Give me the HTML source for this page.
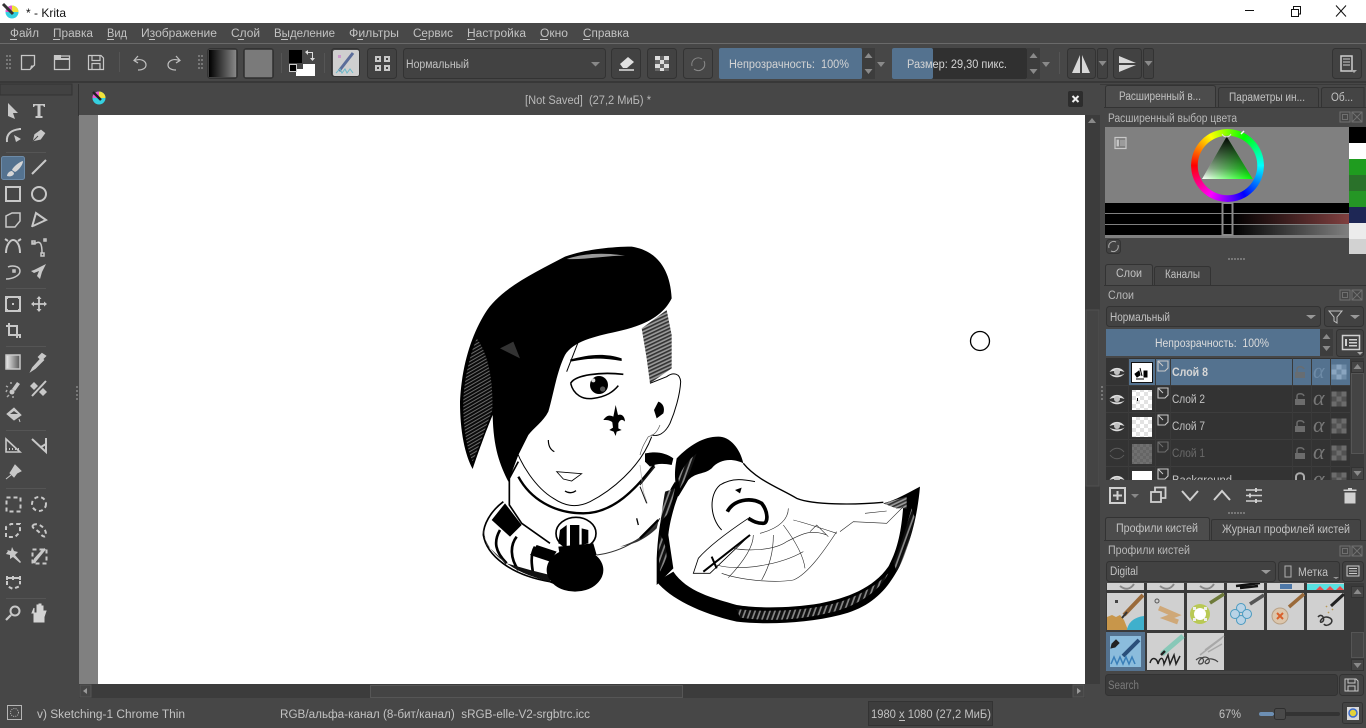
<!DOCTYPE html>
<html lang="ru"><head><meta charset="utf-8"><title>Krita</title>
<style>
html,body{margin:0;padding:0;width:1366px;height:728px;overflow:hidden;background:#474747}
svg{display:block}
text{font-family:"Liberation Sans",sans-serif;font-size:11.5px;fill:#c2c2c2;white-space:pre}
.b{fill:#3d3d3d;stroke:#2f2f2f}
.btn{fill:#424242;stroke:#333}
.i{fill:none;stroke:#c8c8c8;stroke-width:2}
.f{fill:#c8c8c8}
.d{fill:none;stroke:#c8c8c8;stroke-width:2;stroke-dasharray:4 3}
.cell{fill:#d0d0d0}
.al{font-family:"Liberation Serif",serif;font-style:italic;font-size:22px;fill:#777}
</style></head><body>
<svg width="1366" height="728" viewBox="0 0 1366 728" xmlns="http://www.w3.org/2000/svg">
<defs>
<pattern id="ck" width="8" height="8" patternUnits="userSpaceOnUse"><rect width="8" height="8" fill="#fff"/><rect width="4" height="4" fill="#e2e2e2"/><rect x="4" y="4" width="4" height="4" fill="#e2e2e2"/></pattern>
<pattern id="ck2" width="6" height="6" patternUnits="userSpaceOnUse"><rect width="6" height="6" fill="#666"/><rect width="3" height="3" fill="#707070"/><rect x="3" y="3" width="3" height="3" fill="#707070"/></pattern>
<pattern id="hat" width="9" height="9" patternUnits="userSpaceOnUse" patternTransform="rotate(60)"><rect width="9" height="9" fill="#6a6a6a"/><rect width="6" height="9" fill="#0a0a0a"/></pattern>
<pattern id="hat2" width="10" height="10" patternUnits="userSpaceOnUse" patternTransform="rotate(-25)"><rect width="10" height="10" fill="#9a9a9a"/><rect width="10" height="5" fill="#333"/></pattern>
<pattern id="hat3" width="14" height="14" patternUnits="userSpaceOnUse" patternTransform="rotate(20)"><rect width="14" height="14" fill="#888"/><rect width="9" height="14" fill="#111"/></pattern>
<linearGradient id="g1" x1="0" x2="1" y1="0" y2="0"><stop offset="0" stop-color="#000"/><stop offset="1" stop-color="#888"/></linearGradient>
<linearGradient id="g2" x1="0" x2="1" y1="0" y2="0"><stop offset="0" stop-color="#eee"/><stop offset="1" stop-color="#555"/></linearGradient>
<linearGradient id="tw" x1="0" x2="1" y1="0" y2="0"><stop offset="0" stop-color="#fff"/><stop offset="1" stop-color="#0f0"/></linearGradient>
<linearGradient id="tb" x1="0" x2="0" y1="0" y2="1"><stop offset="0" stop-color="#000"/><stop offset=".75" stop-color="#000" stop-opacity=".35"/><stop offset="1" stop-color="#000" stop-opacity="0"/></linearGradient>
<linearGradient id="sr" x1="0" x2="1" y1="0" y2="0"><stop offset="0" stop-color="#000"/><stop offset="1" stop-color="#804040"/></linearGradient>
<linearGradient id="sg" x1="0" x2="1" y1="0" y2="0"><stop offset="0" stop-color="#000"/><stop offset="1" stop-color="#808080"/></linearGradient>
<clipPath id="lc"><rect x="1106" y="358" width="244" height="122"/></clipPath>
<clipPath id="pc"><rect x="1106" y="583" width="244" height="88"/></clipPath>
<g id="eye"><path d="M-7.500 0C-4-5.500 4-5.500 7.500 0C4-1.500-4-1.500-7.500 0Z" fill="#dcdcdc"/><path d="M-7.500 1.500C-4 6.500 4 6.500 7.500 1.500C4 4-4 4-7.500 1.500Z" fill="#dcdcdc"/><circle r="3" fill="#c0c0c0"/></g>
<g id="lk"><path d="M-5 0H5V6H-5Z" fill="#6c6c6c"/><path d="M-3 0V-3C-3-6 3-6 4-3" fill="none" stroke="#6c6c6c" stroke-width="1.500"/></g>
<g id="lg"><rect x="-7.500" y="-7.500" width="15" height="15" fill="#525252"/><path d="M-7.500-7.500h5v5h-5zM2.500-7.500h5v5h-5zM-2.500-2.500h5v5h-5zM-7.500 2.500h5v5h-5zM2.500 2.500h5v5h-5z" fill="#6c6c6c"/></g>
<g id="lay"><path d="M-5-5H5V2L2 5H-5Z" fill="none" stroke="#c8c8c8" stroke-width="1.100"/><path d="M-5-5L0 0M-5-1V-5H-1" stroke="#c8c8c8" fill="none"/></g>
<g id="dk"><rect x="-5" y="-5" width="10" height="10" fill="none" stroke="#707070"/><rect x="-2.500" y="-2.500" width="5" height="5" fill="none" stroke="#707070"/><rect x="7" y="-5" width="10" height="10" fill="none" stroke="#707070"/><path d="M7-5L17 5M17-5L7 5" stroke="#707070"/></g>
<g id="up"><path d="M0-3L4 2H-4Z" fill="#8a8a8a"/></g>
<g id="dn"><path d="M-4-2H4L0 3Z" fill="#8a8a8a"/></g>
</defs>

<rect width="1366" height="728" fill="#474747"/>

<!-- title bar -->
<rect width="1366" height="23" fill="#fff"/>
<circle cx="12" cy="12" r="6.500" fill="#35d0e0"/><path d="M12 5.500A6.500 6.500 0 0 1 18.500 12L12 12Z" fill="#f2e23a"/><path d="M5.500 12A6.500 6.500 0 0 1 12 5.500L12 12Z" fill="#e85bd0"/><path d="M3 4L13 14" stroke="#333" stroke-width="3"/>
<text x="26" y="17" textLength="40" lengthAdjust="spacingAndGlyphs" style="fill:#111;font-size:12px">* - Krita</text>
<rect x="1245" y="10" width="9" height="1" fill="#111"/>
<path d="M1291.500 9.500H1298.500V16.500H1291.500ZM1293.500 9.500V6.500H1300.500V14H1298.500" fill="none" stroke="#111"/>
<path d="M1336 5.500L1346 16.500M1346 5.500L1336 16.500" stroke="#111" fill="none"/>

<!-- menu -->
<rect y="23" width="1366" height="20" fill="#484848"/>
<rect y="43" width="1366" height="1" fill="#6a6a6a"/>
<text x="10" y="37" textLength="29" lengthAdjust="spacingAndGlyphs">Файл</text><rect x="10" y="39" width="7" height="1" fill="#c2c2c2"/>
<text x="53" y="37" textLength="40" lengthAdjust="spacingAndGlyphs">Правка</text><rect x="53" y="39" width="7" height="1" fill="#c2c2c2"/>
<text x="107" y="37" textLength="20" lengthAdjust="spacingAndGlyphs">Вид</text><rect x="107" y="39" width="7" height="1" fill="#c2c2c2"/>
<text x="141" y="37" textLength="76" lengthAdjust="spacingAndGlyphs">Изображение</text><rect x="149" y="39" width="6" height="1" fill="#c2c2c2"/>
<text x="231" y="37" textLength="29" lengthAdjust="spacingAndGlyphs">Слой</text><rect x="238" y="39" width="6" height="1" fill="#c2c2c2"/>
<text x="274" y="37" textLength="61" lengthAdjust="spacingAndGlyphs">Выделение</text><rect x="281" y="39" width="7" height="1" fill="#c2c2c2"/>
<text x="349" y="37" textLength="50" lengthAdjust="spacingAndGlyphs">Фильтры</text><rect x="357" y="39" width="6" height="1" fill="#c2c2c2"/>
<text x="413" y="37" textLength="40" lengthAdjust="spacingAndGlyphs">Сервис</text><rect x="420" y="39" width="6" height="1" fill="#c2c2c2"/>
<text x="467" y="37" textLength="59" lengthAdjust="spacingAndGlyphs">Настройка</text><rect x="467" y="39" width="8" height="1" fill="#c2c2c2"/>
<text x="540" y="37" textLength="28" lengthAdjust="spacingAndGlyphs">Окно</text><rect x="540" y="39" width="8" height="1" fill="#c2c2c2"/>
<text x="583" y="37" textLength="46" lengthAdjust="spacingAndGlyphs">Справка</text><rect x="583" y="39" width="7" height="1" fill="#c2c2c2"/>

<!-- toolbar -->
<path d="M6 55h2v2h-2zM6 59h2v2h-2zM6 63h2v2h-2zM6 67h2v2h-2zM9 55h2v2h-2zM9 59h2v2h-2zM9 63h2v2h-2zM9 67h2v2h-2z" fill="#777"/>
<path d="M198 55h2v2h-2zM198 59h2v2h-2zM198 63h2v2h-2zM198 67h2v2h-2zM201 55h2v2h-2zM201 59h2v2h-2zM201 63h2v2h-2zM201 67h2v2h-2z" fill="#777"/>
<path d="M21.500 55.500H34.500V65L30 69.500H21.500Z" fill="none" stroke="#c8c8c8" stroke-width="1.300"/><path d="M30 69L31 65.500H35" fill="#c8c8c8"/>
<path d="M54.500 56H69.500V69.500H54.500Z" fill="none" stroke="#c8c8c8" stroke-width="1.300"/><rect x="54" y="55" width="7" height="3" fill="#c8c8c8"/><rect x="54" y="58" width="16" height="2" fill="#c8c8c8"/>
<path d="M88.500 55.500H101L103.500 58V69.500H88.500ZM92 55.500V60.500H100V55.500M92 69.500V63.500H100V69.500" fill="none" stroke="#c8c8c8" stroke-width="1.200"/>
<rect x="119" y="52" width="1" height="20" fill="#555"/>
<path d="M138 56L134 60.500L138 63M134.500 60.500C141 58 146 61 146 65C146 68 143 70 138 70" fill="none" stroke="#c0c0c0" stroke-width="1.200"/>
<path d="M176 56L180 60.500L176 63M179.500 60.500C173 58 168 61 168 65C168 68 171 70 176 70" fill="none" stroke="#c0c0c0" stroke-width="1.200"/>
<rect x="207.500" y="48.500" width="30" height="30" rx="3" class="btn"/><rect x="209" y="50" width="27" height="27" fill="url(#g1)"/>
<rect x="243.500" y="48.500" width="30" height="30" rx="3" class="btn"/><rect x="245" y="50" width="27" height="27" fill="#7a7a7a"/>
<rect x="281" y="53" width="1" height="20" fill="#555"/>
<rect x="289" y="50" width="13" height="13" fill="#000"/><rect x="303" y="64" width="12" height="12" fill="#fff"/>
<rect x="296" y="69" width="7" height="7" fill="#fff"/><rect x="289.500" y="64.500" width="7" height="7" fill="#000" stroke="#ccc"/>
<path d="M305 52L308 50V52H313V58H315L312.500 61L310 58H312V53H308V55Z" fill="#ddd"/>
<rect x="324" y="53" width="1" height="20" fill="#555"/>
<rect x="331.500" y="48.500" width="28" height="28" rx="3" class="btn"/><rect x="333" y="50" width="26" height="26" fill="#cfcfcf" rx="2"/>
<path d="M339 71L353 53" stroke="#5b6d9a" stroke-width="3"/><path d="M336 73L340 69L342 73L345 69L347 73L350 69L353 73" fill="none" stroke="#6db9c9"/><rect x="338" y="55" width="3" height="3" fill="#c9c"/>
<rect x="367.500" y="48.500" width="29" height="30" rx="3" class="btn"/>
<path d="M375 56h6v6h-6zM384 56h6v6h-6zM375 65h6v6h-6zM384 65h6v6h-6z" fill="#c8c8c8"/><rect x="377" y="58" width="2" height="2" fill="#424242"/><rect x="386" y="58" width="2" height="2" fill="#424242"/><rect x="377" y="67" width="2" height="2" fill="#424242"/><rect x="386" y="67" width="2" height="2" fill="#424242"/>
<rect x="403.500" y="48.500" width="202" height="30" rx="3" class="btn"/>
<text x="406" y="68" textLength="63" lengthAdjust="spacingAndGlyphs">Нормальный</text>
<path d="M591 62H600L595.500 66.500Z" fill="#888"/>
<rect x="611.500" y="48.500" width="29" height="30" rx="3" class="btn"/>
<path d="M620 64L628 57L634 62L627 68H623Z" fill="#e0e0e0"/><path d="M619 70H634" stroke="#e0e0e0" stroke-width="1.500"/>
<rect x="647.500" y="48.500" width="29" height="30" rx="3" class="btn"/>
<rect x="655" y="56" width="14" height="15" fill="#ddd"/><path d="M660 56h4v4h-4zM655 60h5v4h-5zM664 60h5v4h-5zM660 64h4v4h-4zM655 68h5v3h-5zM664 68h5v3h-5z" fill="#666"/>
<rect x="683.500" y="48.500" width="29" height="30" rx="3" class="btn" style="fill:#474747"/>
<path d="M692 66A6.500 6.500 0 0 1 702 59M704 61A6.500 6.500 0 0 1 694 69" fill="none" stroke="#8a8a8a"/>
<rect x="719" y="48" width="143" height="31" rx="2" fill="#54728f"/>
<text x="729" y="68" textLength="120" lengthAdjust="spacingAndGlyphs" style="fill:#d4d4d4">Непрозрачность:  100%</text>
<rect x="862" y="48" width="13" height="31" fill="#3d3d3d"/><use href="#up" x="868.500" y="56"/><use href="#dn" x="868.500" y="71"/>
<use href="#dn" x="881" y="64"/>
<rect x="892" y="48" width="135" height="31" rx="2" fill="#303030"/><rect x="892" y="48" width="41" height="31" rx="2" fill="#54728f"/>
<text x="907" y="68" textLength="100" lengthAdjust="spacingAndGlyphs" style="fill:#d4d4d4">Размер: 29,30 пикс.</text>
<rect x="1027" y="48" width="13" height="31" fill="#3d3d3d"/><use href="#up" x="1033.500" y="56"/><use href="#dn" x="1033.500" y="71"/>
<use href="#dn" x="1046" y="64"/>
<rect x="1059" y="52" width="1" height="22" fill="#555"/>
<rect x="1067.500" y="48.500" width="28" height="30" rx="3" class="btn"/><path d="M1080 55V73H1072ZM1082 55V73H1090Z" fill="#d8d8d8"/>
<rect x="1097.500" y="48.500" width="10" height="30" rx="2" class="btn"/><use href="#dn" x="1102.500" y="63"/>
<rect x="1113.500" y="48.500" width="28" height="30" rx="3" class="btn"/><path d="M1119 56L1136 63H1119ZM1119 65H1136L1119 72Z" fill="#d8d8d8"/>
<rect x="1143.500" y="48.500" width="10" height="30" rx="2" class="btn"/><use href="#dn" x="1148.500" y="63"/>
<rect x="1332.500" y="48.500" width="29" height="30" rx="3" class="btn"/>
<path d="M1341 56H1352V71H1341Z" fill="none" stroke="#ccc" stroke-width="1.500"/><path d="M1343 59H1350M1343 62H1350M1343 65H1350" stroke="#ccc"/><path d="M1351 70H1357L1354 73Z" fill="#aaa"/>
<rect y="81" width="1366" height="2" fill="#383838"/>

<!-- left toolbox -->
<rect x="0" y="84" width="72" height="11" fill="#424242" stroke="#333"/>
<rect x="78" y="84" width="1" height="32" fill="#333"/>
<rect x="1.500" y="156.500" width="23" height="23" rx="2" fill="#54728f" stroke="#6d8ba8"/>
<path d="M8 103L18 113L13 113L15 119L8 116Z" fill="#c8c8c8"/>
<path d="M33 104H45V107H44L43 105.500H40.500V116H42.500V118H35.500V116H37.500V105.500H35L34 107H33Z" fill="#c8c8c8"/>
<path d="M7 142C6 134 11 130 20 129" class="i"/><path d="M14 135L21 139L16 142Z" class="f"/><rect x="19" y="128" width="2" height="2" class="f"/>
<path d="M32 142L34 134L41 129L46 133L41 140ZM33 141L38 136" class="f" stroke="#474747"/>
<path d="M23 161C19 162 13 167 12 170L15 172C18 171 23 165 23 161ZM12 171C9 171 7 174 7 176C10 177 14 176 14 173Z" fill="#d6d6d6"/>
<path d="M32 174L46 160" class="i"/>
<rect x="6" y="187" width="14" height="14" class="i"/>
<circle cx="39" cy="194" r="7" class="i"/>
<path d="M6 222V216L12 213H20V221L15 227H6Z" class="i" style="stroke-width:1.500"/>
<path d="M32 227L36 213L46 220L33 226" class="i"/>
<path d="M6 253C6 244 11 240 13 240C16 240 20 244 20 253M5 239L8 241M21 239L18 241" class="i"/>
<path d="M32 243H36C40 241 42 243 42 253M32 241h3v3h-3zM41 253h3v3h-3zM44 239h2v2h-2z" class="i" style="stroke-width:1.500"/>
<path d="M6 279C12 279 20 276 20 271C20 266 12 265 8 267M13 270h2v2h-2z" class="i" style="stroke-width:1.500"/>
<path d="M46 264L34 270l-3 1 3 2 5-2-2 5 3 3 2-7ZM46 264L43 274" class="f"/>
<rect x="6" y="297" width="14" height="14" class="i"/><path d="M5 296h3v3h-3zM18 296h3v3h-3zM5 309h3v3h-3zM18 309h3v3h-3zM12 303h2v2h-2z" class="f"/>
<path d="M39 297V311M32 304H46" stroke="#c8c8c8" stroke-width="1.800"/><path d="M39 296l-2.500 3h5zM39 312l-2.500-3h5zM31 304l3-2.500v5zM47 304l-3-2.500v5z" class="f"/>
<path d="M9 323V335H20V338M6 326H17V338" class="i"/>
<rect x="6" y="355" width="14" height="14" fill="url(#g2)" stroke="#c8c8c8" stroke-width="1.500"/>
<path d="M45 356L42 359L43 360L35 368L32 370L33 368L41 359L39 357L42 354Z" class="f" stroke="#c8c8c8" stroke-width="2"/>
<path d="M17 382L20 384L15 391L12 389Z" class="f"/><path d="M6 392l1-2M6 386l2 1M11 382l0 2M7 397l2-2M13 396l0 2" stroke="#aaa" stroke-width="1.500"/><circle cx="12" cy="392" r="2.500" class="f"/>
<path d="M34 382l4 4-4 4-4-4zM43 388l4 4-4 4-4-4z" fill="#c8c8c8"/><path d="M46 381L32 396" stroke="#c8c8c8" stroke-width="2"/>
<path d="M7 414L14 408L21 415L14 420ZM19 419l1 3" class="f" stroke="#c8c8c8"/><path d="M10 414L14 411L18 414" fill="#474747"/>
<path d="M6 452V439L20 452Z" class="i" style="stroke-width:1.600"/><path d="M6 449h14" stroke="#c8c8c8" stroke-dasharray="1 2" stroke-width="2"/>
<path d="M32 439L46 452V438M41 447L46 444" class="i"/>
<path d="M15 465L21 471L17 473L14 477L10 473L12 470ZM11 475L6 479" class="f" stroke="#c8c8c8"/>
<rect x="6.500" y="497.500" width="14" height="14" class="d"/>
<circle cx="39" cy="504" r="7" class="d"/>
<path d="M6 537V527L11 524H20V532L15 537Z" class="d"/>
<path d="M33 525C38 522 46 528 46 534C46 538 42 537 39 532C36 529 31 528 33 525Z" class="d"/>
<path d="M7 550l4 1 1-4 2 4 4 1-3 3 6 7-1 1-7-6-3 2 0-4-4-1 2-3Z" class="f"/>
<rect x="32.500" y="549.500" width="14" height="14" class="d"/><path d="M45 549L36 560L34 563L35 559L43 550Z" class="f" stroke="#c8c8c8" stroke-width="2"/>
<path d="M6 578H20" stroke="#c8c8c8" stroke-width="2"/><path d="M6 576h2v4h-2zM12 576h2v4h-2zM19 576h2v4h-2z" class="f"/><path d="M7 581V586L13 589L20 586V581" class="d"/>
<circle cx="15" cy="611" r="4.500" class="i"/><path d="M11 615L6 620" stroke="#c8c8c8" stroke-width="2.200"/>
<path d="M32 613L34 608V622H44V617L46 611H44L43 614V606H41V613V604H39V613V605H37V613L35 613Z" fill="#d4d4d4" stroke="#d4d4d4"/>
<g fill="#555"><rect x="6" y="152" width="40" height="1"/><rect x="6" y="288" width="40" height="1"/><rect x="6" y="346" width="40" height="1"/><rect x="6" y="430" width="40" height="1"/><rect x="6" y="488" width="40" height="1"/><rect x="6" y="598" width="40" height="1"/></g>
<path d="M76 386h2v2h-2zM76 390h2v2h-2zM76 394h2v2h-2zM76 398h2v2h-2z" fill="#777"/>

<!-- document -->
<text x="525" y="104" textLength="126" lengthAdjust="spacingAndGlyphs" style="fill:#b8b8b8">[Not Saved]  (27,2 МиБ) *</text>
<circle cx="99" cy="98" r="6.500" fill="#35d0e0"/><path d="M99 91.500A6.500 6.500 0 0 1 105.500 98L99 98Z" fill="#f2e23a"/><path d="M92.500 98A6.500 6.500 0 0 1 99 91.500L99 98Z" fill="#e85bd0"/><path d="M93 92L101 100" stroke="#222" stroke-width="2.500"/>
<rect x="1068" y="91" width="15" height="16" rx="2" fill="#2d2d2d"/><path d="M1072.500 96L1078.500 102M1078.500 96L1072.500 102" stroke="#eee" stroke-width="2"/>
<rect x="79" y="115" width="1006" height="569" fill="#808080"/>
<rect x="98" y="115" width="987" height="569" fill="#fff"/>
<rect x="1085" y="115" width="15" height="569" fill="#3c3c3c"/>
<use href="#up" x="1092" y="121"/>
<rect x="1086" y="310" width="13" height="176" fill="#444" stroke="#4f4f4f"/>
<rect x="79" y="684" width="1006" height="14" fill="#3c3c3c"/>
<rect x="80" y="685" width="11" height="12" fill="#464646" stroke="#555"/><path d="M87 688V694L83 691Z" fill="#999"/>
<rect x="370.500" y="685.500" width="312" height="12" fill="#444" stroke="#565656"/>
<rect x="1073" y="685" width="11" height="12" fill="#464646" stroke="#555"/><path d="M1077 688V694L1081 691Z" fill="#999"/>

<!-- character -->
<g transform="translate(450 235) scale(.33333)">
 <path d="M545 35C610 45 660 90 665 190C640 240 590 270 500 290C430 305 370 320 345 360C320 410 310 480 295 530C280 560 250 580 235 600L205 660L175 740C150 690 130 640 128 540C115 570 85 650 68 702C45 660 30 590 30 500C35 390 65 300 105 235C150 160 260 110 345 65C400 45 480 35 545 35Z" fill="#000"/>
 <path d="M80 310C110 350 130 420 127 525C110 570 85 640 68 680C50 640 38 570 40 490C45 420 60 360 80 310Z" fill="url(#hat)"/>
 <path d="M150 340L210 370L190 320Z" fill="#333"/>
 <path d="M350 72C400 55 460 52 525 62C470 62 400 75 350 72Z" fill="#999"/>
 <path d="M575 280L650 225L665 300L665 400L600 445L590 370Z" fill="url(#hat2)"/>
 <path d="M385 320L350 410" stroke="#000" stroke-width="3" fill="none"/>
 <path d="M360 374C410 360 460 352 515 370L515 378C460 368 420 368 362 380Z" fill="#000"/>
 <path d="M362 445C375 420 450 410 520 418" fill="none" stroke="#000" stroke-width="5"/>
 <path d="M362 445C370 480 400 495 430 490C470 485 490 470 505 452" fill="none" stroke="#000" stroke-width="4.500"/>
 <circle cx="447" cy="450" r="27" fill="#000"/><circle cx="430" cy="436" r="6" fill="#ddd"/><circle cx="458" cy="462" r="8" fill="#555"/>
 <path d="M497 510L504 540C515 535 525 545 525 560C518 552 510 552 505 565L505 580L515 585L500 590L497 603L491 590L478 585L489 578L487 562C480 555 470 555 460 555C470 540 480 540 490 545Z" fill="#000"/>
 <path d="M600 445L650 425C670 410 690 415 692 440C690 480 675 530 660 565C645 595 625 605 605 600" fill="none" stroke="#000" stroke-width="3"/>
 <path d="M625 500C640 505 645 520 640 535L620 550L612 525Z" fill="#000"/>
 <path d="M295 615C295 635 303 645 313 650" fill="none" stroke="#000" stroke-width="3.500"/>
 <path d="M320 710L395 716L365 738L340 732Z" fill="#fff" stroke="#000" stroke-width="2.500"/>
 <path d="M345 768C355 775 368 775 378 767" fill="none" stroke="#000" stroke-width="4"/>
 <path d="M190 620C210 690 260 760 310 790C340 810 375 822 420 800C480 770 570 700 605 605" fill="none" stroke="#000" stroke-width="3"/>
 <path d="M205 725C240 790 310 835 400 835C490 835 560 760 612 690" fill="none" stroke="#000" stroke-width="7"/>
 <path d="M590 655C620 648 650 655 668 670L665 685C640 680 600 695 585 680Z" fill="#000"/>
 <path d="M570 690L580 770L592 805" fill="none" stroke="#aaa" stroke-width="2"/>
 <path d="M205 680L178 730L178 810L215 865L300 925" fill="none" stroke="#000" stroke-width="5"/>
 <path d="M440 960C520 950 590 905 630 850" fill="none" stroke="#333" stroke-width="3"/>
 <path d="M560 850L565 870" stroke="#000" stroke-width="4"/>
 <path d="M510 935C560 920 600 890 625 860L620 880C590 910 550 930 510 935Z" fill="#333"/>
 <path d="M160 800C120 830 100 870 100 900C110 960 180 1020 300 1040L340 1055" fill="none" stroke="#000" stroke-width="5"/>
 <path d="M165 805L215 870L180 905L125 855Z" fill="#000"/>
 <path d="M150 885C130 920 135 950 170 985M200 905C180 930 180 970 205 1005M255 935C240 960 245 990 250 1020" fill="none" stroke="#000" stroke-width="8"/>
 <path d="M100 880C100 920 130 960 170 985L110 930Z" fill="#444"/>
 <path d="M170 985C210 1015 260 1030 300 1040L300 1020L240 1005Z" fill="#111"/>
 <path d="M240 960L260 930L320 950L300 980Z" fill="#000"/>
 <ellipse cx="375" cy="1005" rx="85" ry="65" fill="#000"/>
 <ellipse cx="378" cy="895" rx="60" ry="48" fill="#fff" stroke="#000" stroke-width="5"/>
 <path d="M330 885L350 870V935L325 925ZM360 870H388V932H360ZM395 880L415 885V925L395 930Z" fill="#000"/>
 <path d="M325 935L430 925L440 960L330 965Z" fill="#000"/>
</g>
<!-- wing -->
<g transform="translate(640 425) scale(.33333)">
 <path d="M25 35C10 60 5 70 0 90M60 0C50 25 40 30 25 35" fill="none" stroke="#555" stroke-width="2"/>
 <path d="M15 85C50 80 80 85 100 100L95 120C70 115 50 115 30 125L15 110Z" fill="#000"/>
 <path d="M45 125L0 180M0 185L20 235" fill="none" stroke="#111" stroke-width="3"/>
 <path d="M55 285L0 340" fill="none" stroke="#000" stroke-width="7"/>
 <path d="M110 100C150 60 190 35 235 35C270 35 300 70 310 115C280 100 240 100 215 130C190 150 170 140 145 165L115 215C100 160 105 130 110 100Z" fill="#000"/>
 <path d="M115 160C125 130 145 105 170 85L150 140L120 190Z" fill="url(#hat3)"/>
 <path d="M105 170C70 220 55 300 50 400L50 480L100 430L85 330C90 280 110 220 120 200Z" fill="#000"/>
 <path d="M60 330C70 340 80 370 80 400L60 440C55 400 55 360 60 330Z" fill="url(#hat3)"/>
 <path d="M75 200C70 230 65 260 62 290L90 260L105 190Z" fill="url(#hat3)"/>
 <path d="M50 470C90 520 180 565 290 590C380 600 500 595 600 570C680 550 730 510 770 440C800 380 830 300 840 185C810 200 770 225 730 235L770 250L790 240C785 310 775 370 745 425C700 490 620 520 540 535C450 550 350 550 290 540C220 520 140 500 100 440Z" fill="#000"/>
 <path d="M290 552C350 560 450 560 540 545C620 530 690 500 745 445C720 500 640 550 560 565C480 585 380 590 300 578Z" fill="url(#hat3)"/>
 <path d="M760 410C785 360 800 300 815 250L825 280C810 340 795 400 770 440Z" fill="url(#hat3)"/>
 <path d="M730 235L800 215L800 250L770 250Z" fill="url(#hat2)"/>
 <path d="M310 115C350 165 420 190 470 220C520 240 640 240 730 232" fill="none" stroke="#000" stroke-width="4"/>
 <path d="M245 315C210 280 205 210 240 180C280 155 320 165 345 170" fill="none" stroke="#000" stroke-width="3"/>
 <path d="M285 195L305 188L300 205Z" fill="#000"/>
 <path d="M262 260C280 225 330 215 365 235C385 260 385 295 370 295C345 295 335 285 325 280" fill="none" stroke="#000" stroke-width="11"/>
 <path d="M325 280C280 310 210 360 175 400L160 445L210 445L330 330" fill="none" stroke="#000" stroke-width="2.500"/>
 <path d="M190 440L330 330M215 395L230 430" fill="none" stroke="#000" stroke-width="6"/>
 <path d="M445 250C445 280 420 310 360 325M280 370C320 378 400 378 440 350C480 330 510 310 560 330M230 420C300 440 420 420 490 380M245 445C300 465 400 475 460 465C510 445 570 350 590 320M460 285C500 295 560 315 590 325M340 330C340 360 320 400 265 458M400 330C400 380 390 420 365 465M430 300C460 340 490 390 495 430M510 320L530 300L565 335M675 265L740 258M600 320L640 290L740 295L790 245" fill="none" stroke="#222" stroke-width="1.800"/>
</g>
<circle cx="980" cy="341" r="9.500" fill="none" stroke="#000" stroke-width="1.300"/>

<!-- status bar -->
<rect x="7.500" y="705.500" width="14" height="14" fill="none" stroke="#b5b5b5"/><circle cx="14.500" cy="712.500" r="4" fill="none" stroke="#b5b5b5" stroke-dasharray="1 1.200"/>
<text x="37" y="718" textLength="148" lengthAdjust="spacingAndGlyphs">v) Sketching-1 Chrome Thin</text>
<text x="280" y="718" textLength="310" lengthAdjust="spacingAndGlyphs">RGB/альфа-канал (8-бит/канал)  sRGB-elle-V2-srgbtrc.icc</text>
<rect x="868.500" y="701.500" width="124" height="24" fill="#3d3d3d" stroke="#333"/>
<text x="871" y="718" textLength="120" lengthAdjust="spacingAndGlyphs">1980 x 1080 (27,2 МиБ)</text><rect x="899" y="720" width="6" height="1" fill="#c2c2c2"/>
<text x="1219" y="718" textLength="22" lengthAdjust="spacingAndGlyphs">67%</text>
<rect x="1259" y="712" width="81" height="4" rx="2" fill="#333"/><rect x="1259" y="712" width="15" height="4" rx="2" fill="#6d8fb3"/>
<rect x="1274.500" y="708.500" width="11" height="11" rx="2" fill="#4a4a4a" stroke="#2f2f2f"/>
<rect x="1342.500" y="702.500" width="20" height="21" rx="2" fill="#444" stroke="#333"/><rect x="1347" y="707" width="12" height="13" fill="#d9d9d9"/><circle cx="1353" cy="713" r="4" fill="#e3d23a" stroke="#3a6ad0" stroke-width="1.500"/>

<!-- dock tabs -->
<rect x="1100" y="84" width="266" height="1" fill="#3a3a3a"/>
<path d="M1105.500 107V88Q1105.500 85.500 1108 85.500H1213Q1215.500 85.500 1215.500 88V107" fill="#4c4c4c" stroke="#333"/>
<path d="M1218.500 107V90Q1218.500 87.500 1221 87.500H1316Q1318.500 87.500 1318.500 90V107" fill="#444" stroke="#333"/>
<path d="M1321.500 107V90Q1321.500 87.500 1324 87.500H1364V107" fill="#444" stroke="#333"/>
<text x="1119" y="100" textLength="82" lengthAdjust="spacingAndGlyphs">Расширенный в...</text>
<text x="1229" y="101" textLength="76" lengthAdjust="spacingAndGlyphs">Параметры ин...</text>
<text x="1331" y="101" textLength="22" lengthAdjust="spacingAndGlyphs">Об...</text>
<rect x="1104" y="107" width="262" height="1" fill="#333"/>
<text x="1108" y="122" textLength="129" lengthAdjust="spacingAndGlyphs" style="fill:#b8b8b8">Расширенный выбор цвета</text>
<use href="#dk" x="1345" y="117"/>

<!-- colour selector -->
<rect x="1105" y="127" width="244" height="111" fill="#808080"/>
<rect x="1115" y="137.500" width="11" height="11" fill="none" stroke="#c8c8c8" stroke-width="1.200"/><path d="M1117 140h1.500v6H1117zM1120 141h5M1120 143h5M1120 145h5" stroke="#c8c8c8" fill="#c8c8c8" stroke-width=".8"/>
<foreignObject x="1191" y="129" width="73" height="73"><div xmlns="http://www.w3.org/1999/xhtml" style="width:73px;height:73px;border-radius:50%;background:conic-gradient(from 270deg,#f00,#ff0,#0f0,#0ff,#00f,#f0f,#f00);-webkit-mask:radial-gradient(circle,transparent 29.500px,#000 30px);mask:radial-gradient(circle,transparent 29.500px,#000 30px)"></div></foreignObject>
<polygon points="1226.700,136.500 1202,179 1252.700,179" fill="url(#tw)"/>
<polygon points="1226.700,136.500 1202,179 1252.700,179" fill="url(#tb)"/>
<path d="M1222 134A5 5 0 0 0 1231 134" fill="none" stroke="#ddd"/>
<path d="M1241 134L1244 131" stroke="#fff" stroke-width="1.500"/>
<rect x="1105" y="203" width="244" height="10" fill="#000"/>
<rect x="1105" y="214" width="244" height="10" fill="#000"/><rect x="1232" y="214" width="117" height="10" fill="url(#sr)"/>
<rect x="1105" y="225" width="244" height="10" fill="#000"/><rect x="1232" y="225" width="117" height="10" fill="url(#sg)"/>
<rect x="1222.500" y="203" width="10" height="32" fill="#000" stroke="#8a8a8a" stroke-width="2"/>
<path d="M1223 213.500H1232M1223 224.500H1232" stroke="#8a8a8a"/>
<rect x="1349" y="127" width="17" height="16" fill="#000"/><rect x="1349" y="143" width="17" height="16" fill="#fff"/><rect x="1349" y="159" width="17" height="16" fill="#1f9c1f"/><rect x="1349" y="175" width="17" height="16" fill="#2a712a"/><rect x="1349" y="191" width="17" height="16" fill="#259625"/><rect x="1349" y="207" width="17" height="16" fill="#1e2755"/><rect x="1349" y="223" width="17" height="16" fill="#ececec"/><rect x="1349" y="239" width="17" height="15" fill="#d2d2d2"/>
<rect x="1106.500" y="239.500" width="14" height="14" rx="3" fill="#424242" stroke="#333"/><path d="M1109 248A5 5 0 0 1 1116 242M1118 245A5 5 0 0 1 1111 251" fill="none" stroke="#aaa"/>
<path d="M1228 258h2v2h-2zM1231 258h2v2h-2zM1234 258h2v2h-2zM1237 258h2v2h-2zM1240 258h2v2h-2zM1243 258h2v2h-2z" fill="#777"/>

<!-- layers -->
<path d="M1105.500 285V267Q1105.500 264.500 1108 264.500H1150Q1152.500 264.500 1152.500 267V285" fill="#4c4c4c" stroke="#333"/>
<path d="M1154.500 285V269Q1154.500 266.500 1157 266.500H1208Q1210.500 266.500 1210.500 269V285" fill="#444" stroke="#333"/>
<text x="1116" y="277" textLength="26" lengthAdjust="spacingAndGlyphs">Слои</text>
<text x="1165" y="278" textLength="35" lengthAdjust="spacingAndGlyphs">Каналы</text>
<rect x="1104" y="285" width="262" height="1" fill="#333"/>
<text x="1108" y="299" textLength="26" lengthAdjust="spacingAndGlyphs" style="fill:#b8b8b8">Слои</text>
<use href="#dk" x="1345" y="295"/>
<rect x="1106.500" y="306.500" width="214" height="20" rx="3" class="btn"/>
<text x="1110" y="321" textLength="60" lengthAdjust="spacingAndGlyphs">Нормальный</text>
<path d="M1306 315H1316L1311 319Z" fill="#999"/>
<rect x="1324.500" y="306.500" width="39" height="20" rx="3" class="btn"/>
<path d="M1329 311H1342L1337 317V323L1334 321V317Z" fill="none" stroke="#c0c0c0"/><path d="M1350 315H1360L1355 319Z" fill="#999"/>
<rect x="1106" y="329" width="214" height="27" fill="#54728f"/>
<text x="1155" y="347" textLength="114" lengthAdjust="spacingAndGlyphs" style="fill:#dcdcdc">Непрозрачность:  100%</text>
<rect x="1320" y="329" width="13" height="27" fill="#3d3d3d"/><use href="#up" x="1326.500" y="337"/><use href="#dn" x="1326.500" y="348"/>
<rect x="1336.500" y="329.500" width="27" height="27" rx="3" class="btn"/>
<rect x="1342.500" y="335.500" width="17" height="14" fill="none" stroke="#d0d0d0" stroke-width="1.500"/><path d="M1345 339h2v7h-2zM1349 339h8v1.500h-8zM1349 342h8v1.500h-8zM1349 345h8v1.500h-8z" fill="#d0d0d0"/><path d="M1357 352H1363L1360 355Z" fill="#aaa"/>

<rect x="1106" y="358" width="244" height="122" fill="#333"/>
<g clip-path="url(#lc)">
 <rect x="1129" y="359" width="221" height="26" fill="#54728f"/>
 <g stroke="#3d3d3d"><path d="M1106 385.500H1350M1106 412.500H1350M1106 439.500H1350M1106 466.500H1350"/></g>
 <g stroke="#3a3a3a"><path d="M1128.500 358V480M1155.500 358V480M1170.500 358V480M1292.500 358V480M1311.500 358V480M1330.500 358V480"/></g>
 <use href="#eye" x="1117" y="372"/><use href="#eye" x="1117" y="399"/><use href="#eye" x="1117" y="426"/>
 <path d="M1110 452C1114 447 1120 447 1124 452M1110 455C1114 460 1120 460 1124 455" fill="none" stroke="#5d5d5d"/>
 <use href="#eye" x="1117" y="480"/>
 <rect x="1131.500" y="362.500" width="21" height="20" fill="#fff" stroke="#111"/>
 <path d="M1135 374l4-3 1 4-3 2zM1140 368l2 8M1144 371h3v6h-3zM1136 379h8" stroke="#000" fill="#000"/>
 <rect x="1132" y="390" width="20" height="20" fill="url(#ck)"/><rect x="1137" y="398" width="1" height="3" fill="#000"/>
 <rect x="1132" y="417" width="20" height="20" fill="url(#ck)"/>
 <rect x="1132" y="444" width="20" height="20" fill="url(#ck2)"/>
 <rect x="1132" y="471" width="20" height="20" fill="#fff"/>
 <use href="#lay" x="1163" y="366"/><use href="#lay" x="1163" y="393"/><use href="#lay" x="1163" y="420"/><use href="#lay" x="1163" y="447" opacity=".4"/><use href="#lay" x="1163" y="474"/>
 <text x="1172" y="376" textLength="36" lengthAdjust="spacingAndGlyphs" style="font-weight:bold;fill:#d6d6d6">Слой 8</text>
 <text x="1172" y="403" textLength="33" lengthAdjust="spacingAndGlyphs">Слой 2</text>
 <text x="1172" y="430" textLength="33" lengthAdjust="spacingAndGlyphs">Слой 7</text>
 <text x="1172" y="457" textLength="33" lengthAdjust="spacingAndGlyphs" style="fill:#6a6a6a">Слой 1</text>
 <text x="1172" y="484" textLength="60" lengthAdjust="spacingAndGlyphs">Background</text>
 <use href="#lk" x="1300" y="372" opacity=".8"/><use href="#lk" x="1300" y="399"/><use href="#lk" x="1300" y="426"/><use href="#lk" x="1300" y="453"/>
 <path d="M1296 481V477C1296 472 1304 472 1304 477V481" fill="none" stroke="#aaa" stroke-width="2"/>
 <text class="al" x="1313" y="378" style="fill:#6d8aa6">α</text><text class="al" x="1313" y="405">α</text><text class="al" x="1313" y="432">α</text><text class="al" x="1313" y="459">α</text><text class="al" x="1313" y="486">α</text>
 <g transform="translate(1339 372)"><rect x="-7.500" y="-7.500" width="15" height="15" fill="#6d8aa6"/><path d="M-7.500-2.500h5v5h-5zM2.500-2.500h5v5h-5zM-2.500-7.500h5v5h-5zM-2.500 2.500h5v5h-5z" fill="#8aa5c0"/></g>
 <use href="#lg" x="1339" y="399"/><use href="#lg" x="1339" y="426"/><use href="#lg" x="1339" y="453"/><use href="#lg" x="1339" y="480"/>
</g>
<rect x="1350" y="358" width="14" height="122" fill="#3a3a3a"/>
<rect x="1351.500" y="361.500" width="12" height="11" fill="#454545" stroke="#333"/><use href="#up" x="1357.500" y="367"/>
<rect x="1351.500" y="373.500" width="12" height="80" fill="#444" stroke="#555"/>
<rect x="1351.500" y="467.500" width="12" height="12" fill="#454545" stroke="#333"/><use href="#dn" x="1357.500" y="473"/>
<path d="M1101 386h2v2h-2zM1101 390h2v2h-2zM1101 394h2v2h-2zM1101 398h2v2h-2z" fill="#777"/>
<rect x="1110" y="488" width="15" height="15" fill="none" stroke="#d0d0d0" stroke-width="2"/><path d="M1113 495.500H1122M1117.500 491V500" stroke="#d0d0d0" stroke-width="2"/>
<path d="M1131 494H1139L1135 498Z" fill="#888"/>
<path d="M1155 492V487.500H1165.500V498H1161" fill="none" stroke="#d0d0d0" stroke-width="1.800"/><rect x="1151" y="492" width="10" height="10" fill="none" stroke="#d0d0d0" stroke-width="1.800"/>
<path d="M1182 491L1190 500L1198 491" fill="none" stroke="#d0d0d0" stroke-width="2"/>
<path d="M1214 500L1222 491L1230 500" fill="none" stroke="#d0d0d0" stroke-width="2"/>
<path d="M1246 490H1262M1246 495.500H1262M1246 501H1262" stroke="#d0d0d0" stroke-width="1.500"/><rect x="1255" y="488" width="2" height="4" fill="#d0d0d0"/><rect x="1249" y="493.500" width="2" height="4" fill="#d0d0d0"/><rect x="1255" y="499" width="2" height="4" fill="#d0d0d0"/>
<path d="M1344 490H1356V490.500H1344ZM1345 493H1355V503H1345Z" fill="#d0d0d0" stroke="#d0d0d0"/><rect x="1348" y="488" width="4" height="2" fill="#d0d0d0"/>
<path d="M1228 512h2v2h-2zM1231 512h2v2h-2zM1234 512h2v2h-2zM1237 512h2v2h-2zM1240 512h2v2h-2zM1243 512h2v2h-2z" fill="#777"/>

<!-- brush presets -->
<path d="M1105.500 540V520Q1105.500 517.500 1108 517.500H1207Q1209.500 517.500 1209.500 520V540" fill="#4c4c4c" stroke="#333"/>
<path d="M1211.500 540V521Q1211.500 519.500 1214 519.500H1358Q1360.500 519.500 1360.500 521V540" fill="#444" stroke="#333"/>
<text x="1116" y="532" textLength="82" lengthAdjust="spacingAndGlyphs">Профили кистей</text>
<text x="1222" y="533" textLength="128" lengthAdjust="spacingAndGlyphs">Журнал профилей кистей</text>
<rect x="1104" y="540" width="262" height="1" fill="#333"/>
<text x="1108" y="554" textLength="82" lengthAdjust="spacingAndGlyphs" style="fill:#b8b8b8">Профили кистей</text>
<use href="#dk" x="1345" y="551"/>
<rect x="1106.500" y="561.500" width="169" height="20" rx="3" class="btn"/>
<text x="1110" y="575" textLength="28" lengthAdjust="spacingAndGlyphs">Digital</text>
<path d="M1261 570H1271L1266 574Z" fill="#999"/>
<rect x="1278.500" y="561.500" width="61" height="20" rx="3" class="btn"/>
<path d="M1285 566H1291V577H1285Z" fill="none" stroke="#b0b0b0"/>
<text x="1298" y="576" textLength="30" lengthAdjust="spacingAndGlyphs">Метка</text>
<path d="M1333 577H1339L1336 579Z" fill="#999"/>
<rect x="1342.500" y="561.500" width="21" height="20" rx="3" class="btn"/>
<rect x="1347" y="566" width="12" height="10" fill="none" stroke="#ccc"/><path d="M1349 568.500h8M1349 571h8M1349 573.500h8" stroke="#ccc"/>
<rect x="1106" y="583" width="244" height="88" fill="#3a3a3a"/>
<g clip-path="url(#pc)">
 <rect x="1107" y="553" width="37" height="37" class="cell"/><rect x="1147" y="553" width="37" height="37" class="cell"/><rect x="1187" y="553" width="37" height="37" class="cell"/><rect x="1227" y="553" width="37" height="37" class="cell"/><rect x="1267" y="553" width="37" height="37" class="cell"/><rect x="1307" y="553" width="37" height="37" class="cell"/>
 <path d="M1120 586C1125 590 1130 590 1134 584M1160 586C1165 590 1170 590 1174 584M1200 586C1205 590 1210 590 1214 584" fill="none" stroke="#888" stroke-width="2"/>
 <path d="M1236 586L1260 583M1240 588L1258 586" stroke="#111" stroke-width="2.500"/>
 <rect x="1280" y="584" width="12" height="5" fill="#4e78a8"/>
 <rect x="1307" y="584" width="37" height="6" fill="#58e0e0"/><path d="M1316 590l4-4 4 4zM1326 590l4-4 4 4zM1336 590l4-4 4 4z" fill="#e85050"/>
</g>
<rect x="1107" y="593" width="37" height="37" class="cell"/><rect x="1147" y="593" width="37" height="37" class="cell"/><rect x="1187" y="593" width="37" height="37" class="cell"/><rect x="1227" y="593" width="37" height="37" class="cell"/><rect x="1267" y="593" width="37" height="37" class="cell"/><rect x="1307" y="593" width="37" height="37" class="cell"/>
<rect x="1106" y="632" width="39" height="39" fill="#54728f"/><rect x="1110" y="636" width="31" height="31" fill="#8bbcdc"/>
<rect x="1147" y="633" width="37" height="37" class="cell"/><rect x="1187" y="633" width="37" height="37" class="cell"/>
<path d="M1107 617L1112 615L1116 617L1120 615L1124 620L1128 630H1107Z" fill="#c8964a"/><path d="M1127 630C1128 622 1135 617 1144 616V630Z" fill="#3fb0cc"/><rect x="1115" y="600" width="3" height="3" fill="#444"/><path d="M1124 615L1143 595" stroke="#9a6a3a" stroke-width="4"/><path d="M1122 618L1127 612" stroke="#333" stroke-width="2"/>
<circle cx="1157" cy="601" r="2" fill="none" stroke="#555"/><path d="M1159 608L1175 615L1167 618L1178 622" fill="none" stroke="#cfa878" stroke-width="5"/>
<circle cx="1200" cy="614" r="10" fill="#b9c955"/><circle cx="1200" cy="614" r="6" fill="#fff"/><path d="M1193 607h3v3h-3zM1204 607h3v3h-3zM1193 618h3v3h-3zM1204 618h3v3h-3z" fill="#eee"/><path d="M1210 603L1224 594" stroke="#6e7a3a" stroke-width="3.500"/>
<g fill="#b9d3e6" stroke="#4a9ac0"><circle cx="1241" cy="608" r="4.500"/><circle cx="1241" cy="620" r="4.500"/><circle cx="1235" cy="614" r="4.500"/><circle cx="1247" cy="614" r="4.500"/></g><path d="M1250 604L1264 595" stroke="#555" stroke-width="3.500"/>
<circle cx="1280" cy="616" r="8" fill="#dcc6ac" stroke="#b8a085"/><path d="M1277 613l6 6M1283 613l-6 6" stroke="#d9602a" stroke-width="2"/><path d="M1289 607L1304 594" stroke="#9a6a3a" stroke-width="3.500"/>
<path d="M1331 606L1344 594" stroke="#222" stroke-width="3"/><path d="M1318 617C1322 612 1326 620 1322 622C1318 624 1322 614 1330 618C1336 622 1326 628 1324 624" fill="none" stroke="#333" stroke-width="1.500"/><path d="M1326 607l1-1M1332 610l1-1M1328 612l1 1" stroke="#b99a55" stroke-width="1.500"/>
<path d="M1123 656L1139 640" stroke="#2a4f7a" stroke-width="4"/><path d="M1112 644l4-4 3 3-4 4zM1112 644l-1 4 4-1" fill="#222" stroke="#222"/>
<path d="M1111 664L1114 657L1117 664L1120 657L1123 664L1126 657L1129 664L1132 657L1135 664" fill="none" stroke="#3a7fb8" stroke-width="1.500"/>
<path d="M1162 654L1183 636" stroke="#88c8b8" stroke-width="5"/><path d="M1161 655l4-4" stroke="#222" stroke-width="2.500"/><path d="M1150 663C1152 656 1157 658 1158 664C1160 657 1163 656 1164 664L1168 655L1170 664L1174 655L1176 664L1180 656" fill="none" stroke="#222" stroke-width="1.500"/>
<path d="M1200 655L1222 638M1205 650L1224 636M1208 652L1222 644" stroke="#a8a8a8" stroke-width="1.500"/><path d="M1196 660C1204 653 1206 664 1200 664C1196 664 1202 654 1208 658C1212 662 1206 666 1205 662C1208 656 1216 660 1218 662" fill="none" stroke="#444" stroke-width="1.200"/>
<rect x="1350" y="583" width="14" height="88" fill="#3a3a3a"/>
<rect x="1351.500" y="586.500" width="12" height="11" fill="#454545" stroke="#333"/><use href="#up" x="1357.500" y="592"/>
<rect x="1351.500" y="632.500" width="12" height="25" fill="#444" stroke="#555"/>
<rect x="1351.500" y="659.500" width="12" height="11" fill="#454545" stroke="#333"/><use href="#dn" x="1357.500" y="665"/>
<rect x="1105.500" y="674.500" width="232" height="21" rx="3" fill="#3a3a3a" stroke="#333"/>
<text x="1108" y="689" textLength="31" lengthAdjust="spacingAndGlyphs" style="fill:#7a7a7a">Search</text>
<rect x="1339.500" y="674.500" width="24" height="21" rx="3" class="btn"/>
<path d="M1345 679H1356L1358 681V691H1345ZM1348 679V683H1355V679M1348 691V686H1355V691" fill="none" stroke="#c8c8c8"/>
</svg>
</body></html>
